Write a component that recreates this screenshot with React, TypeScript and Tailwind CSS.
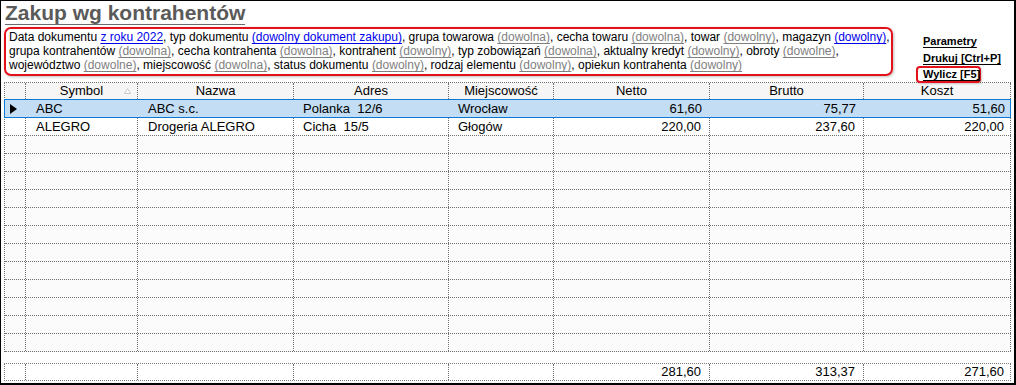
import React from 'react';

interface Row {
  symbol: string;
  nazwa: string;
  adres: string;
  miasto: string;
  netto: string;
  brutto: string;
  koszt: string;
  selected?: boolean;
}

const rows: Row[] = [
  { symbol: 'ABC', nazwa: 'ABC s.c.', adres: 'Polanka  12/6', miasto: 'Wrocław', netto: '61,60', brutto: '75,77', koszt: '51,60', selected: true },
  { symbol: 'ALEGRO', nazwa: 'Drogeria ALEGRO', adres: 'Cicha  15/5', miasto: 'Głogów', netto: '220,00', brutto: '237,60', koszt: '220,00' },
];

const EMPTY_ROWS = 12;

// column widths: indicator, Symbol, Nazwa, Adres, Miejscowość, Netto, Brutto, Koszt
const colW = ['w-[21px]', 'w-[112px]', 'w-[156px]', 'w-[155px]', 'w-[105px]', 'w-[156px]', 'w-[154px]', 'w-[147px]'];

const Gray: React.FC<{ children: React.ReactNode }> = ({ children }) => (
  <span className="text-[#808080] underline underline-offset-2">{children}</span>
);

const Blue: React.FC<{ children: React.ReactNode }> = ({ children }) => (
  <span className="text-[#0000ee] underline underline-offset-2">{children}</span>
);

const cell = 'shrink-0 h-full border-r border-dotted border-[#707070] flex items-center';

const App: React.FC = () => {
  return (
    <div className="w-[1016px] h-[385px] bg-white border-t border-l border-r-2 border-b-2 border-black overflow-hidden font-['Liberation_Sans',Arial,sans-serif] text-black">
      {/* Title */}
      <div className="h-[26px] pl-[4px]">
        <span className="inline-block text-[21px] leading-[23px] font-bold text-[#5a5a5a] border-b border-[#6a6a6a]">
          Zakup wg kontrahentów
        </span>
      </div>

      {/* Filters + actions */}
      <div className="flex h-[55px] pl-[3px]">
        <div className="w-[889px] h-[49px] border-2 border-[#e4101a] rounded-[7px] shadow-[1px_1px_3px_rgba(0,0,0,0.25)] pl-[3px] pt-[1px] text-[12px] leading-[14px] whitespace-nowrap">
          <div>
            Data dokumentu <Blue>z roku 2022</Blue>, typ dokumentu <Blue>(dowolny dokument zakupu)</Blue>, grupa towarowa <Gray>(dowolna)</Gray>, cecha towaru <Gray>(dowolna)</Gray>, towar <Gray>(dowolny)</Gray>, magazyn <Blue>(dowolny)</Blue>,
          </div>
          <div>
            grupa kontrahentów <Gray>(dowolna)</Gray>, cecha kontrahenta <Gray>(dowolna)</Gray>, kontrahent <Gray>(dowolny)</Gray>, typ zobowiązań <Gray>(dowolna)</Gray>, aktualny kredyt <Gray>(dowolny)</Gray>, obroty <Gray>(dowolne)</Gray>,
          </div>
          <div>
            województwo <Gray>(dowolne)</Gray>, miejscowość <Gray>(dowolna)</Gray>, status dokumentu <Gray>(dowolny)</Gray>, rodzaj elementu <Gray>(dowolny)</Gray>, opiekun kontrahenta <Gray>(dowolny)</Gray>
          </div>
        </div>

        <div className="ml-[23px] relative z-10 text-[11px] font-bold whitespace-nowrap">
          <div className="mt-[6px] h-[17px] leading-[16px] pl-[7px] underline underline-offset-2">Parametry</div>
          <div className="h-[16px] leading-[16px] pl-[7px] underline underline-offset-2">Drukuj [Ctrl+P]</div>
          <div className="h-[17px] w-[65px] border-2 border-[#e4101a] rounded-[4px] bg-white shadow-[1px_1px_2px_rgba(0,0,0,0.2)] pl-[5px] leading-[13px] underline underline-offset-2">
            Wylicz [F5]
          </div>
        </div>
      </div>

      {/* Grid */}
      <div className="ml-[3px] w-[1007px] text-[13px]">
        <div className="border-l border-t border-dotted border-[#707070]">
          {/* Header */}
          <div className="flex h-[17px] border-b border-dotted border-[#707070] bg-[#f6f6f6]">
            <div className={`${cell} ${colW[0]}`} />
            <div className={`${cell} ${colW[1]} justify-center relative`}>
              Symbol
              <svg className="absolute right-[6px] top-[5px]" width="7" height="6" viewBox="0 0 7 6">
                <path d="M3.5 0.5 L6.5 5.5 L0.5 5.5 Z" fill="#ffffff" stroke="#c8c8c8" strokeWidth="1" />
              </svg>
            </div>
            <div className={`${cell} ${colW[2]} justify-center`}>Nazwa</div>
            <div className={`${cell} ${colW[3]} justify-center`}>Adres</div>
            <div className={`${cell} ${colW[4]} justify-center`}>Miejscowość</div>
            <div className={`${cell} ${colW[5]} justify-center`}>Netto</div>
            <div className={`${cell} ${colW[6]} justify-center`}>Brutto</div>
            <div className={`${cell} ${colW[7]} justify-center`}>Koszt</div>
          </div>

          {/* Data rows */}
          {rows.map((r) =>
            r.selected ? (
              <div key={r.symbol} className="flex -mt-px -ml-px w-[1007px] h-[19px] border border-[#0a7ad6] bg-[#c2ddf4]">
                <div className={`shrink-0 h-full flex items-center ${colW[0]} pl-[5px]`}>
                  <svg width="7" height="10" viewBox="0 0 7 10">
                    <path d="M0 0 L7 5 L0 10 Z" fill="#000" />
                  </svg>
                </div>
                <div className={`shrink-0 h-full flex items-center ${colW[1]} pl-[10px]`}>{r.symbol}</div>
                <div className={`shrink-0 h-full flex items-center ${colW[2]} pl-[10px]`}>{r.nazwa}</div>
                <div className={`shrink-0 h-full flex items-center ${colW[3]} pl-[9px] whitespace-pre`}>{r.adres}</div>
                <div className={`shrink-0 h-full flex items-center ${colW[4]} pl-[9px]`}>{r.miasto}</div>
                <div className={`shrink-0 h-full flex items-center justify-end ${colW[5]} pr-[8px]`}>{r.netto}</div>
                <div className={`shrink-0 h-full flex items-center justify-end ${colW[6]} pr-[8px]`}>{r.brutto}</div>
                <div className={`shrink-0 h-full flex items-center justify-end ${colW[7]} pr-[6px]`}>{r.koszt}</div>
              </div>
            ) : (
              <div key={r.symbol} className="flex h-[18px] border-b border-dotted border-[#707070] bg-white">
                <div className={`${cell} ${colW[0]}`} />
                <div className={`${cell} ${colW[1]} pl-[10px]`}>{r.symbol}</div>
                <div className={`${cell} ${colW[2]} pl-[10px]`}>{r.nazwa}</div>
                <div className={`${cell} ${colW[3]} pl-[9px] whitespace-pre`}>{r.adres}</div>
                <div className={`${cell} ${colW[4]} pl-[9px]`}>{r.miasto}</div>
                <div className={`${cell} ${colW[5]} justify-end pr-[8px]`}>{r.netto}</div>
                <div className={`${cell} ${colW[6]} justify-end pr-[8px]`}>{r.brutto}</div>
                <div className={`${cell} ${colW[7]} justify-end pr-[6px]`}>{r.koszt}</div>
              </div>
            )
          )}

          {/* Empty rows */}
          {Array.from({ length: EMPTY_ROWS }).map((_, i) => (
            <div key={i} className="flex h-[18px] border-b border-dotted border-[#707070] bg-[#fbfbfb]">
              {colW.map((w, j) => (
                <div key={j} className={`${cell} ${w}`} />
              ))}
            </div>
          ))}
        </div>

        {/* Totals */}
        <div className="mt-[11px] flex h-[18px] border border-dotted border-[#808080] bg-white">
          <div className={`${cell} ${colW[0]}`} />
          <div className={`${cell} ${colW[1]}`} />
          <div className={`${cell} ${colW[2]}`} />
          <div className={`${cell} ${colW[3]}`} />
          <div className={`${cell} ${colW[4]}`} />
          <div className={`${cell} ${colW[5]} justify-end pr-[8px]`}>281,60</div>
          <div className={`${cell} ${colW[6]} justify-end pr-[8px]`}>313,37</div>
          <div className="shrink-0 h-full flex items-center justify-end w-[146px] pr-[6px]">271,60</div>
        </div>
      </div>
    </div>
  );
};

export default App;
